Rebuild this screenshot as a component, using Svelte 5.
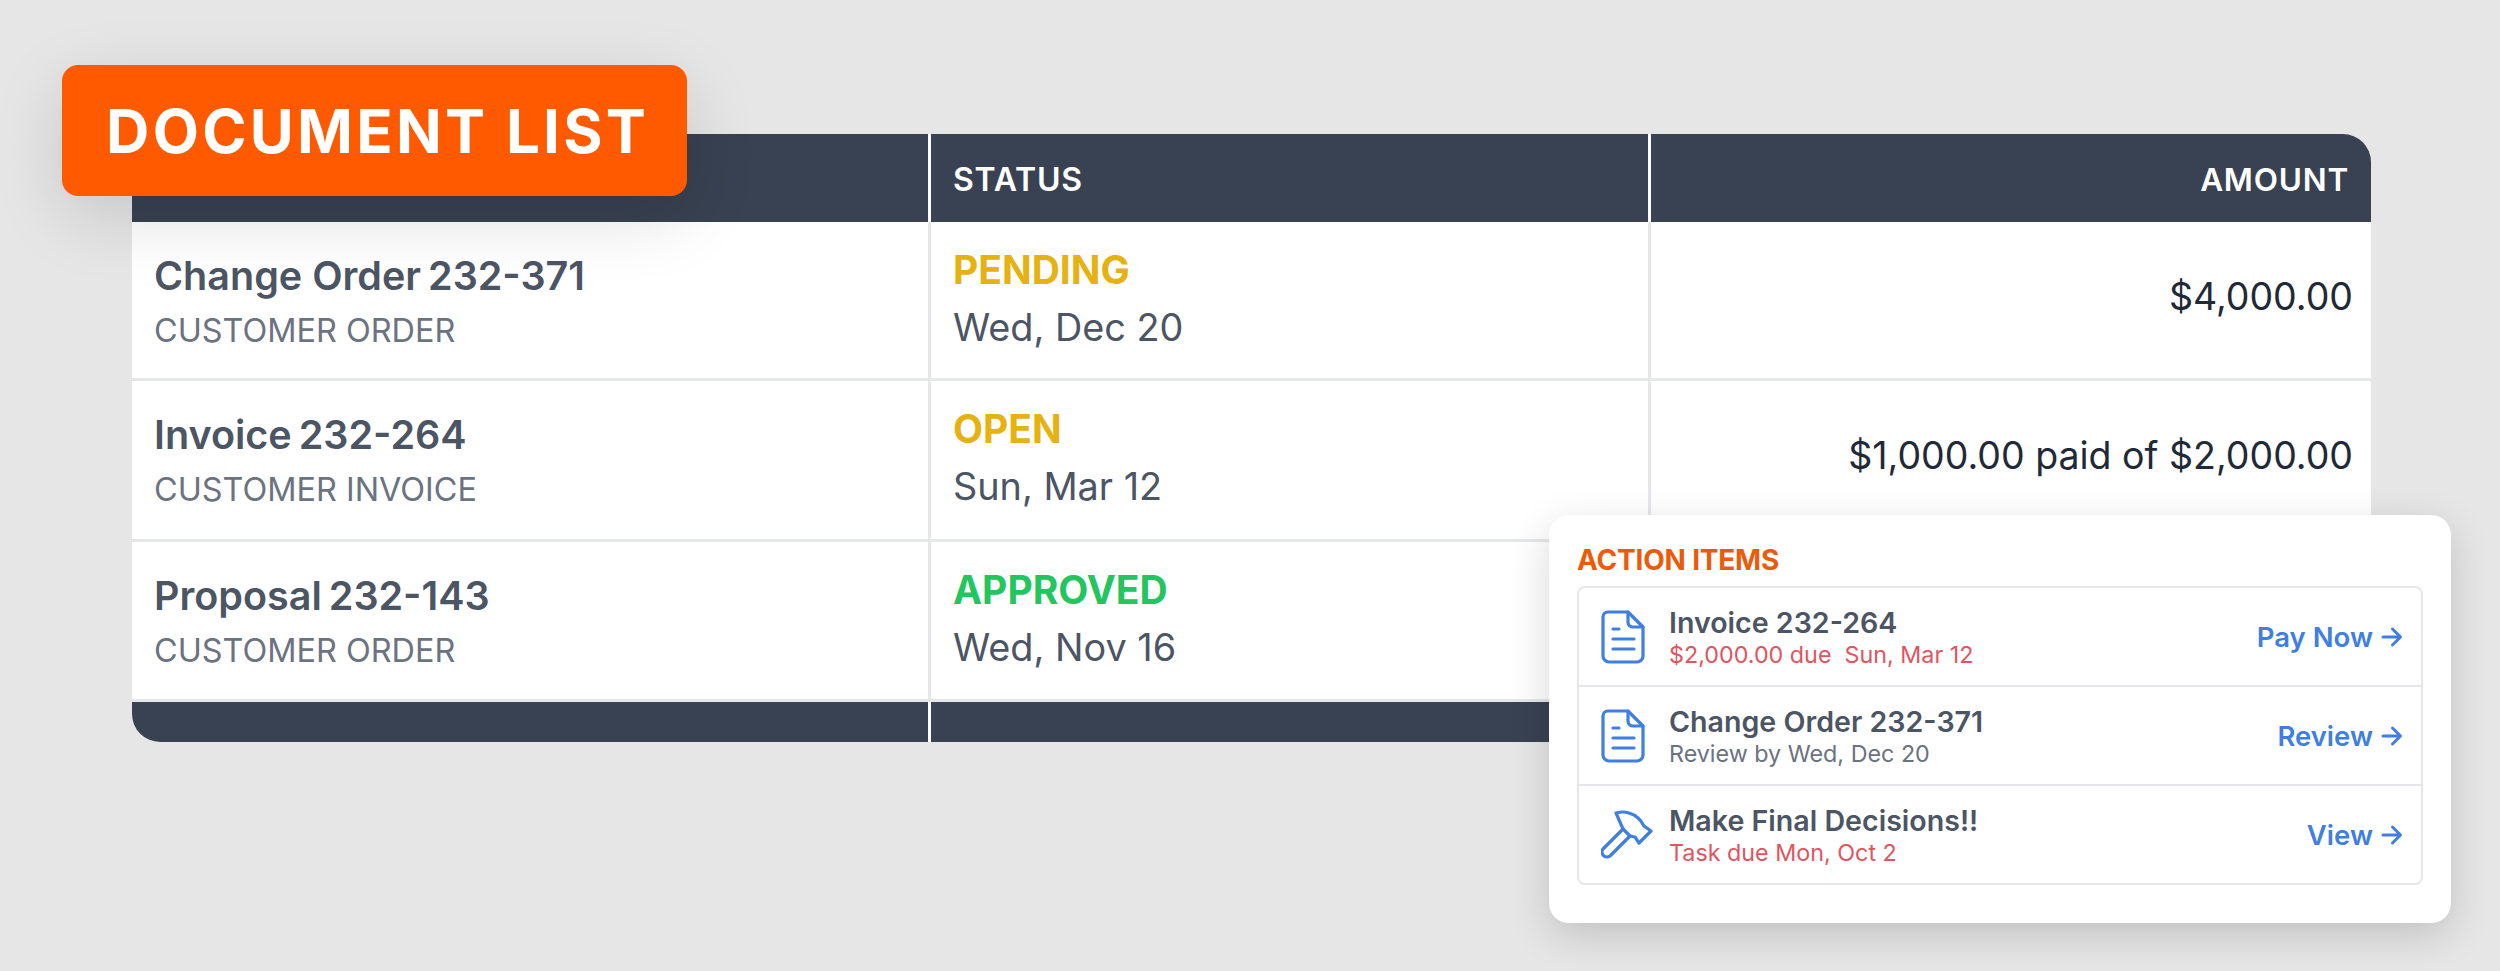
<script lang="ts">
    const rows = [
        { name: "Change Order", num: "232-371", kind: "CUSTOMER ORDER", status: "PENDING", tone: "pending", date: "Wed, Dec 20", amount: "$4,000.00" },
        { name: "Invoice", num: "232-264", kind: "CUSTOMER INVOICE", status: "OPEN", tone: "pending", date: "Sun, Mar 12", amount: "$1,000.00 paid of $2,000.00" },
        { name: "Proposal", num: "232-143", kind: "CUSTOMER ORDER", status: "APPROVED", tone: "approved", date: "Wed, Nov 16", amount: "" },
    ];

    const actions = [
        { icon: "doc", title: "Invoice 232-264", sub: "$2,000.00 due\u00a0 Sun, Mar 12", late: true, link: "Pay Now" },
        { icon: "doc", title: "Change Order 232-371", sub: "Review by Wed, Dec 20", late: false, link: "Review" },
        { icon: "hammer", title: "Make Final Decisions!!", sub: "Task due Mon, Oct 2", late: true, link: "View" },
    ];
</script>

<div class="page">
    <div class="table-wrap">
        <div class="doc-table">
            <div class="cell head"></div>
            <div class="cell head">STATUS</div>
            <div class="cell head right">AMOUNT</div>

            {#each rows as row}
                <div class="cell body">
                    <div class="name">{row.name}<span class="num">{row.num}</span></div>
                    <div class="kind">{row.kind}</div>
                </div>
                <div class="cell body state">
                    <div class="status {row.tone}">{row.status}</div>
                    <div class="date">{row.date}</div>
                </div>
                <div class="cell body amount">{row.amount}</div>
            {/each}

            <div class="cell foot"></div>
            <div class="cell foot"></div>
            <div class="cell foot"></div>
        </div>

        <div class="badge">DOCUMENT LIST</div>

        <div class="panel">
            <div class="panel-title">ACTION ITEMS</div>
            <div class="action-list">
                {#each actions as item}
                    <div class="action">
                        <div class="icon">
                            {#if item.icon === "doc"}
                                <svg width="44" height="54" viewBox="0 0 44 54" fill="none" stroke="#3f7fe0" stroke-width="3.200" stroke-linecap="round" stroke-linejoin="round">
                                    <path d="M7 2h20l15 15v29a6 6 0 0 1-6 6H8a6 6 0 0 1-6-6V7a5 5 0 0 1 5-5z" />
                                    <path d="M27 2v10a5 5 0 0 0 5 5h10" />
                                    <path d="M12 19h6M12 29h21M12 39h21" />
                                </svg>
                            {:else}
                                <svg width="52" height="50" viewBox="0 0 52 50" fill="none" stroke="#3f7fe0" stroke-width="3.200" stroke-linecap="round" stroke-linejoin="round">
                                    <path d="M22 19L15 3Q22 1 28 3Q38 6 43 16L50 21L38 33L34 27L29 26L9 46A5 5 0 0 1 2 39Z" />
                                    <path d="M22 19L29 26" />
                                </svg>
                            {/if}
                        </div>
                        <div class="action-text">
                            <div class="action-title">{item.title}</div>
                            <div class="action-sub" class:late={item.late}>{item.sub}</div>
                        </div>
                        <div class="action-link">
                            {item.link}
                            <svg width="22" height="22" viewBox="0 0 22 22" fill="none" stroke="#3f7fe0" stroke-width="3" stroke-linecap="round" stroke-linejoin="round">
                                <path d="M2 11h17M11.500 3l8 8l-8 8" />
                            </svg>
                        </div>
                    </div>
                {/each}
            </div>
        </div>
    </div>
</div>

<style>
    :global(body) {
        margin: 0;
        background: #e6e6e6;
        font-family: Inter, "Liberation Sans", sans-serif;
    }

    .page {
        height: 971px;
        box-sizing: border-box;
        padding: 134px 129px 0 132px;
        overflow: hidden;
    }

    .table-wrap {
        position: relative;
        width: 2239px;
    }

    .doc-table {
        display: grid;
        grid-template-columns: 799px 720px 720px;
        grid-template-rows: 88px 159px 161px 160px 40px;
        border-radius: 28px;
        overflow: hidden;
        background: #fff;
    }

    .cell {
        box-sizing: border-box;
        border-right: 3px solid #e5e7eb;
    }

    .cell:nth-child(3n) {
        border-right: 0;
    }

    .head {
        background: #394252;
        color: #fff;
        font-size: 32px;
        font-weight: 600;
        letter-spacing: 0.8px;
        display: flex;
        align-items: center;
        padding: 2px 22px 0;
        border-right-color: #fff;
    }

    .head.right {
        justify-content: flex-end;
        font-size: 31.500px;
    }

    .foot {
        background: #394252;
        border-right-color: #fff;
    }

    .body {
        padding: 32px 22px 0;
        border-bottom: 3px solid #e5e7eb;
    }

    .name {
        font-size: 39.500px;
        font-weight: 600;
        color: #4b5563;
        line-height: 44px;
    }

    .num {
        margin-left: 7px;
    }

    .kind {
        font-size: 32.400px;
        color: #6b7280;
        line-height: 36px;
        margin-top: 15px;
    }

    .body.state {
        padding-top: 26px;
    }

    .status {
        font-size: 39px;
        font-weight: 700;
        line-height: 44px;
    }

    .pending {
        color: #e5b212;
    }

    .approved {
        color: #22c55e;
    }

    .date {
        font-size: 37.800px;
        color: #4b5563;
        line-height: 44px;
        margin-top: 13px;
    }

    .body.amount {
        padding: 53px 18px 0 0;
        text-align: right;
        font-size: 37.500px;
        line-height: 44px;
        color: #1f2937;
    }

    .badge {
        position: absolute;
        left: -70px;
        top: -69px;
        width: 625px;
        height: 131px;
        box-sizing: border-box;
        padding: 1px 0 0 44px;
        display: flex;
        align-items: center;
        background: #ff5a00;
        color: #fff;
        border-radius: 16px;
        font-size: 60px;
        font-weight: 700;
        letter-spacing: 3.300px;
        box-shadow: 0 20px 70px rgba(0, 0, 0, 0.14);
    }

    .panel {
        position: absolute;
        left: 1417px;
        top: 381px;
        width: 902px;
        height: 408px;
        box-sizing: border-box;
        padding: 29px 28px 0;
        background: #fff;
        border-radius: 20px;
        box-shadow: 0 12px 40px rgba(0, 0, 0, 0.16);
    }

    .panel-title {
        font-size: 28px;
        font-weight: 700;
        letter-spacing: -0.2px;
        color: #ea5c0c;
        line-height: 32px;
        margin-bottom: 10px;
    }

    .action-list {
        border: 2px solid #e5e7eb;
        border-radius: 8px;
    }

    .action {
        height: 97px;
        display: flex;
        align-items: center;
        padding: 0 18px 0 22px;
        border-bottom: 2px solid #e5e7eb;
    }

    .action:last-child {
        border-bottom: 0;
    }

    .icon {
        width: 68px;
        display: flex;
    }

    .action-text {
        flex: 1;
        padding-top: 2px;
    }

    .action-title {
        font-size: 28.600px;
        font-weight: 600;
        color: #4b5563;
        line-height: 34px;
    }

    .action-sub {
        font-size: 23.300px;
        color: #6b7280;
        line-height: 28px;
        margin-top: 1px;
    }

    .action-sub.late {
        color: #e0555f;
    }

    .action-link {
        display: flex;
        align-items: center;
        gap: 8px;
        font-size: 27.500px;
        font-weight: 600;
        color: #3f7fe0;
    }
</style>
